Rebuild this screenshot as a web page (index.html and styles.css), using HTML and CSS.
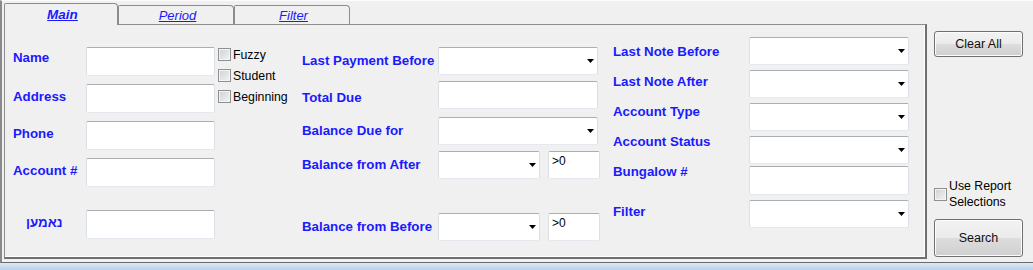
FILE: index.html
```html
<!DOCTYPE html>
<html lang="en">
<head>
    <meta charset="UTF-8">
    <title>Account Search</title>
    <link rel="stylesheet" href="styles.css">
</head>
<body>
    <div class="window">
        <div class="tabs">
            <div class="tabstrip">
                <a class="tab tab-active">Main</a>
                <a class="tab">Period</a>
                <a class="tab">Filter</a>
            </div>
            <div class="panel">
                <!-- name / address block -->
                <div class="col col-main">
                    <div class="rows">
                        <div class="row"><span class="lbl lbl-name">Name</span><input class="tb"></div>
                        <div class="row"><span class="lbl">Address</span><input class="tb"></div>
                        <div class="row"><span class="lbl">Phone</span><input class="tb"></div>
                        <div class="row"><span class="lbl">Account #</span><input class="tb"></div>
                        <div class="row row-hebrew"><span class="lbl lbl-hebrew">נאמען</span><input class="tb"></div>
                    </div>
                    <div class="checks">
                        <label class="chk"><span class="box"></span>Fuzzy</label>
                        <label class="chk"><span class="box"></span>Student</label>
                        <label class="chk"><span class="box"></span>Beginning</label>
                    </div>
                </div>

                <!-- payments / balances -->
                <div class="col col-mid">
                    <div class="rows">
                        <div class="row"><span class="lbl">Last Payment Before</span><div class="combo"></div></div>
                        <div class="row"><span class="lbl lbl-low">Total Due</span><input class="tb tb-wide"></div>
                        <div class="row row-gap"><span class="lbl">Balance Due for</span><div class="combo"></div></div>
                        <div class="row"><span class="lbl">Balance from After</span><div class="combo combo-sm"></div><input class="tb tb-sm" value="&gt;0"></div>
                        <div class="row row-far"><span class="lbl">Balance from Before</span><div class="combo combo-sm"></div><input class="tb tb-sm" value="&gt;0"></div>
                    </div>
                </div>

                <!-- notes / account -->
                <div class="col col-right">
                    <div class="lbl-stack">
                        <span class="lbl">Last Note Before</span>
                        <span class="lbl">Last Note After</span>
                        <span class="lbl">Account Type</span>
                        <span class="lbl">Account Status</span>
                        <span class="lbl">Bungalow #</span>
                        <span class="lbl lbl-filter">Filter</span>
                    </div>
                    <div class="ctl-stack">
                        <div class="combo"></div>
                        <div class="combo"></div>
                        <div class="combo"></div>
                        <div class="combo"></div>
                        <input class="tb tb-wide tb-tall">
                        <div class="combo"></div>
                    </div>
                </div>
            </div>
        </div>

        <div class="side">
            <button class="btn btn-clear">Clear All</button>
            <label class="chk chk-report"><span class="box"></span><span>Use Report<br>Selections</span></label>
            <button class="btn btn-search">Search</button>
        </div>
    </div>
    <div class="taskbar"></div>
</body>
</html>
```

FILE: styles.css
```css
* {
    box-sizing: border-box;
}
body {
    margin: 0;
    background: #f0f0f0;
    font-family: "Liberation Sans", Arial, sans-serif;
    color: #000;
}
.window {
    display: flex;
    height: 263px;
    border-left: 2px solid #8a8a8a;
    border-top: 1px solid #fcfcfc;
    border-bottom: 1px solid #6b6b6b;
    background: #f0f0f0;
}
.taskbar {
    height: 7px;
    background: linear-gradient(#dce9f6, #b9d2ec);
}

/* tabs */
.tabs {
    width: 923px;
    margin-left: 2px;
    padding-top: 2px;
    display: flex;
    flex-direction: column;
}
.tabstrip {
    height: 21px;
    display: flex;
    align-items: flex-end;
}
.tab {
    height: 19px;
    width: 116px;
    display: flex;
    align-items: center;
    justify-content: center;
    border: 1px solid #898c95;
    border-bottom: none;
    border-radius: 2px 4px 0 0;
    background: #f0f0f0;
    color: #1a1aff;
    font-size: 13px;
    font-style: italic;
    text-decoration: underline;
    padding-left: 3px;
}
.tab-active {
    width: 114px;
    height: 22px;
    margin-bottom: -1px;
    position: relative;
    z-index: 1;
    font-weight: bold;
    font-size: 13.5px;
    padding-bottom: 1px;
}
.panel {
    height: 235px;
    display: flex;
    padding-left: 8px;
    border: 1px solid #8d8d8d;
    border-right: 2px solid #6f6f6f;
    border-bottom: 2px solid #6f6f6f;
    box-shadow: inset -1px -1px 0 #fff;
}

/* labels + controls */
.lbl {
    color: #1a1aff;
    font-size: 13.3px;
    font-weight: bold;
    line-height: 16px;
    white-space: nowrap;
    flex-shrink: 0;
}
.tb {
    display: block;
    height: 28px;
    border: 1px solid #dbdfe6;
    border-top-color: #abadb3;
    border-bottom-color: #e3e9ef;
    border-radius: 2px;
    background: #fff;
    font-family: "Liberation Sans", Arial, sans-serif;
    font-size: 12px;
    padding: 0 3px;
    margin: 0;
    outline: none;
}
.combo {
    width: 160px;
    height: 28px;
    display: flex;
    align-items: center;
    justify-content: flex-end;
    padding-right: 3px;
    border: 1px solid #dbdfe6;
    border-top-color: #abadb3;
    border-bottom-color: #e3e9ef;
    border-radius: 2px;
    background: #fff;
}
.combo::after {
    content: "";
    width: 7px;
    height: 4px;
    background: #000;
    clip-path: polygon(0 0, 100% 0, 50% 100%);
}
.rows {
    display: flex;
    flex-direction: column;
}
.row {
    display: flex;
    align-items: center;
}

/* column 1 */
.col-main {
    width: 289px;
    flex-shrink: 0;
    display: flex;
    padding-top: 22px;
}
.col-main .rows {
    gap: 8px;
}
.col-main .lbl {
    width: 73px;
    margin-bottom: 3px;
}
.col-main .lbl-name {
    margin-bottom: 8px;
}
.col-main .tb {
    width: 129px;
    height: 29px;
}
.row-hebrew {
    margin-top: 15px;
}
.lbl-hebrew {
    padding-left: 13px;
}
.checks {
    display: flex;
    flex-direction: column;
    gap: 8px;
    margin: 1px 0 0 3px;
}
.chk {
    display: flex;
    align-items: center;
    gap: 2px;
    height: 13px;
    font-size: 12.3px;
    line-height: 16px;
    color: #000;
}
.box {
    width: 13px;
    height: 13px;
    flex-shrink: 0;
    border: 1px solid #8e8f8f;
    background: linear-gradient(135deg, #cdd0d4, #f4f4f4);
    box-shadow: inset 0 0 0 1px #f4f4f4;
}

/* column 2 */
.col-mid {
    width: 311px;
    flex-shrink: 0;
    padding-top: 22px;
}
.col-mid .rows {
    gap: 6px;
}
.col-mid .lbl {
    width: 136px;
}
.col-mid .lbl-low {
    margin-top: 6px;
}
.tb-wide {
    width: 160px;
}
.row-gap {
    margin-top: 2px;
}
.row-far {
    margin-top: 28px;
}
.combo-sm {
    width: 102px;
}
.tb-sm {
    width: 52px;
    height: 28px;
    margin-left: 8px;
    padding: 0 3px 8px;
    line-height: 14px;
}

/* column 3 */
.col-right {
    display: flex;
}
.lbl-stack {
    width: 136px;
    display: flex;
    flex-direction: column;
    gap: 14px;
    padding-top: 19px;
}
.lbl-filter {
    margin-top: 10px;
}
.ctl-stack {
    display: flex;
    flex-direction: column;
    gap: 5px;
    padding-top: 12px;
}
.ctl-stack .tb-tall {
    height: 29px;
    margin-top: -3px;
}

/* right side buttons */
.side {
    width: 89px;
    margin-left: 7px;
    display: flex;
    flex-direction: column;
    padding: 30px 0 5px;
}
.btn {
    width: 89px;
    border: 1px solid #707070;
    border-radius: 3px;
    background: linear-gradient(#f2f2f2 0%, #ebebeb 50%, #dddddd 50%, #cfcfcf 100%);
    box-shadow: inset 0 0 0 1px #fcfcfc;
    font-family: "Liberation Sans", Arial, sans-serif;
    font-size: 12.5px;
    color: #111;
    padding: 0;
}
.btn-clear {
    height: 26px;
}
.chk-report {
    margin-top: auto;
    height: 32px;
}
.btn-search {
    height: 38px;
    margin-top: 9px;
}
```
